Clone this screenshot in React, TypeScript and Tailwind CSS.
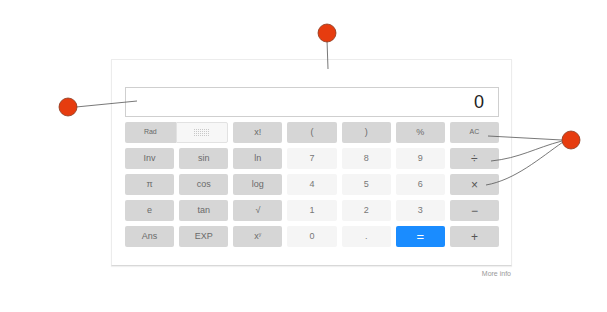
import React from "react";

type Key = { label: React.ReactNode; kind: "fn" | "num" | "eq" | "op" };

const rows: Key[][] = [
  [
    { label: "x!", kind: "fn" },
    { label: "(", kind: "fn" },
    { label: ")", kind: "fn" },
    { label: "%", kind: "fn" },
    { label: <span className="text-[7px]">AC</span>, kind: "fn" },
  ],
  [
    { label: "Inv", kind: "fn" },
    { label: "sin", kind: "fn" },
    { label: "ln", kind: "fn" },
    { label: "7", kind: "num" },
    { label: "8", kind: "num" },
    { label: "9", kind: "num" },
    { label: "÷", kind: "op" },
  ],
  [
    { label: "π", kind: "fn" },
    { label: "cos", kind: "fn" },
    { label: "log", kind: "fn" },
    { label: "4", kind: "num" },
    { label: "5", kind: "num" },
    { label: "6", kind: "num" },
    { label: "×", kind: "op" },
  ],
  [
    { label: "e", kind: "fn" },
    { label: "tan", kind: "fn" },
    { label: "√", kind: "fn" },
    { label: "1", kind: "num" },
    { label: "2", kind: "num" },
    { label: "3", kind: "num" },
    { label: "−", kind: "op" },
  ],
  [
    { label: "Ans", kind: "fn" },
    { label: "EXP", kind: "fn" },
    {
      label: (
        <span>
          x<sup className="text-[5px]">y</sup>
        </span>
      ),
      kind: "fn",
    },
    { label: "0", kind: "num" },
    { label: ".", kind: "num" },
    { label: "=", kind: "eq" },
    { label: "+", kind: "op" },
  ],
];

const kindClass = {
  fn: "bg-[#d6d6d6] text-[#6a6a6a] text-[9px]",
  op: "bg-[#d6d6d6] text-[#555] text-[12px]",
  num: "bg-[#f5f5f5] text-[#777] text-[9px]",
  eq: "bg-[#1a8cff] text-white text-[13px]",
};

const CalcKey = ({ k }: { k: Key }) => (
  <div
    className={`h-[21px] rounded-[2px] flex items-center justify-center ${kindClass[k.kind]}`}
  >
    {k.label}
  </div>
);

const Pin = ({ cx, cy }: { cx: number; cy: number }) => (
  <circle cx={cx} cy={cy} r={9} fill="#e63c0f" stroke="#8a3a20" strokeWidth={0.8} />
);

export default function App() {
  return (
    <div
      className="relative w-[607px] h-[312px] bg-white overflow-hidden"
      style={{ fontFamily: '"Liberation Sans", Arial, sans-serif' }}
    >
      <div className="pt-[59px] pl-[111px]">
        <div className="w-[401px] h-[207px] border border-[#ececec] border-b-[#d8d8d8] shadow-[0_1px_1px_rgba(0,0,0,0.06)] pt-[27px] pl-[13px] pr-[12px]">
          <div className="h-[30px] border border-[#cfcfcf] flex items-center justify-end pr-[14px] text-[18px] text-[#222]">
            0
          </div>
          <div className="mt-[5px] grid grid-cols-7 gap-x-[5px] gap-y-[5px]">
            <div className="col-span-2 flex h-[21px]">
              <div className="flex-1 bg-[#d6d6d6] text-[#666] text-[7px] flex items-center justify-center rounded-l-[2px]">
                Rad
              </div>
              <div className="flex-1 bg-[#f7f7f7] border border-[#e2e2e2] flex items-center justify-center rounded-r-[2px]">
                <svg width="16" height="8" viewBox="0 0 16 8">
                  {[0, 1, 2, 3].map((r) =>
                    [0, 1, 2, 3, 4, 5, 6, 7].map((c) => (
                      <rect key={`${r}-${c}`} x={c * 2} y={r * 2} width="1" height="1" fill="#c8c8c8" />
                    ))
                  )}
                </svg>
              </div>
            </div>
            {rows.flat().map((k, i) => (
              <CalcKey key={i} k={k} />
            ))}
          </div>
        </div>
        <div className="w-[401px] text-right text-[7px] text-[#999] mt-[3px] pr-[1px]">More info</div>
      </div>

      <svg className="absolute inset-0 pointer-events-none" width="607" height="312">
        <g fill="none" stroke="#555" strokeWidth={0.8}>
          <line x1="327" y1="40" x2="328" y2="69" />
          <line x1="76" y1="107" x2="137" y2="101" />
          <path d="M488 136 L562 140" />
          <path d="M491 161 C520 158 535 148 562 141" />
          <path d="M486 185 C515 180 540 158 563 142" />
        </g>
        <Pin cx={327} cy={33} />
        <Pin cx={68} cy={107} />
        <Pin cx={571} cy={140} />
      </svg>
    </div>
  );
}
